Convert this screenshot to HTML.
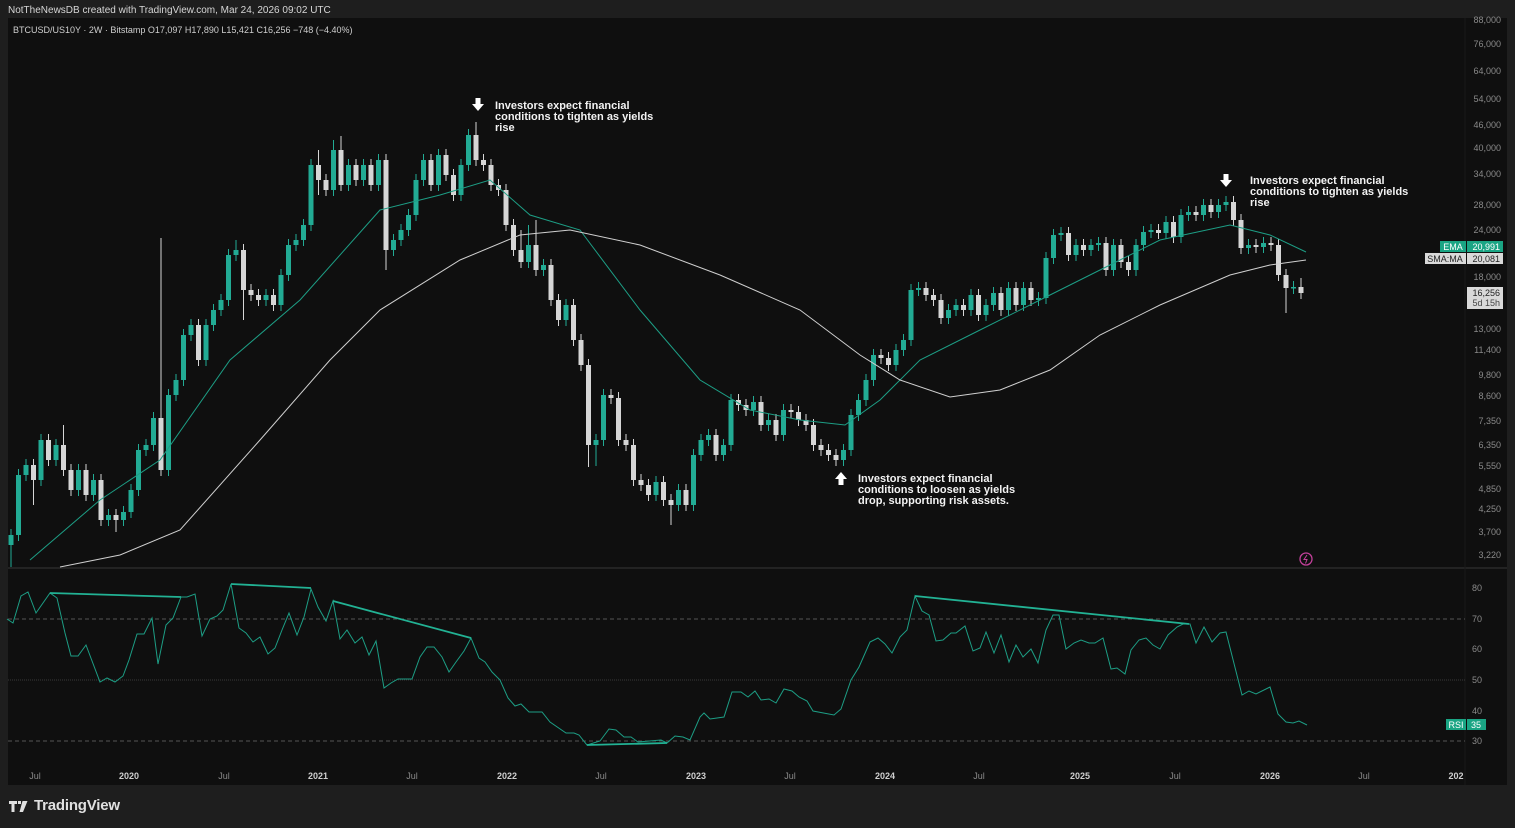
<!DOCTYPE html>
<html><head><meta charset="utf-8">
<style>
html,body{margin:0;padding:0;background:#1e1e1e;width:1515px;height:828px;overflow:hidden;font-family:"Liberation Sans",sans-serif}
#top{position:absolute;left:8px;top:5px;color:#d6d6d6;font-size:10px}
#panel{position:absolute;left:8px;top:18px;width:1499px;height:767px;background:#0f0f0f}
svg{position:absolute;left:0;top:0}
#logo{position:absolute;left:34px;top:797px;color:#e0e0e0;font-size:15px;font-weight:bold;letter-spacing:-0.2px}
</style></head><body>
<div id="top">NotTheNewsDB created with TradingView.com, Mar 24, 2026 09:02 UTC</div>
<div id="panel"></div>
<svg width="1515" height="828" xmlns="http://www.w3.org/2000/svg" font-family="Liberation Sans, sans-serif">
<text x="13" y="33" fill="#cfcfcf" font-size="9">BTCUSD/US10Y · 2W · Bitstamp  O17,097  H17,890  L15,421  C16,256  −748 (−4.40%)</text>
<line x1="8" y1="568" x2="1507" y2="568" stroke="#2a2a2a" stroke-width="1.5"/>
<line x1="1465" y1="18" x2="1465" y2="785" stroke="#1a1a1a"/>
<!-- green candles -->
<path stroke="#22ab94" stroke-width="1" fill="none" d="M11 529V567M18.5 469V541M26 459V481M41 434V486M56 439V466M78.5 464V496M93.5 474V501M108.5 509V526M123.5 506V526M131 484V518M138.5 444V496M146 439V456M153.5 412V451M168.5 389V476M176 374V401M183.5 329V386M191 319V341M206 319V366M213.5 304V331M221 294V316M228.5 249V306M236 240V261M266 289V306M281 269V311M288.5 239V281M296 234V251M303.5 219V246M311 159V231M333.5 140V196M348.5 159V191M363.5 159V186M378.5 154V191M393.5 234V256M401 224V246M408.5 209V236M416 174V221M423.5 154V186M438.5 149V191M461 159V201M468.5 129V171M528.5 225V268M543.5 259V276M566 299V326M596 434V466M603.5 389V446M656 476V501M678.5 484V511M693.5 449V511M701 434V461M708.5 429V446M723.5 439V461M731 394V451M753.5 396V416M768.5 414V431M783.5 404V441M843.5 444V466M851 409V456M858.5 394V421M866 374V406M873.5 349V386M896 344V371M903.5 334V356M911 284V346M918.5 282V296M948.5 304V324M956 299V316M971 289V316M986 299V321M993.5 287V311M1008.5 282V316M1023.5 282V311M1038.5 292V306M1046 252V304M1053.5 229V264M1061 227V241M1076 239V261M1091 239V256M1098.5 237V251M1113.5 239V276M1136 239V276M1143.5 226V251M1151 224V238M1166 216V239M1181 209V243M1188.5 206V221M1203.5 199V221M1218.5 199V218M1226 196V211M1248.5 239V254M1263.5 237V253M1293.5 281V294"/>
<path stroke="#22ab94" stroke-width="5" fill="none" d="M11 535V545M18.5 475V535M26 465V475M41 440V480M56 445V460M78.5 470V490M93.5 480V495M108.5 515V520M123.5 512V520M131 490V512M138.5 450V490M146 445V450M153.5 418V445M168.5 395V470M176 380V395M183.5 335V380M191 325V335M206 325V360M213.5 310V325M221 300V310M228.5 255V300M236 250V255M266 295V300M281 275V305M288.5 245V275M296 240V245M303.5 225V240M311 165V225M333.5 150V190M348.5 165V185M363.5 165V180M378.5 160V185M393.5 240V250M401 230V240M408.5 215V230M416 180V215M423.5 160V180M438.5 155V185M461 165V195M468.5 135V165M528.5 245V262M543.5 265V270M566 305V320M596 440V445M603.5 395V440M656 482V495M678.5 490V505M693.5 455V505M701 440V455M708.5 435V440M723.5 445V455M731 400V445M753.5 402V410M768.5 420V425M783.5 410V435M843.5 450V460M851 415V450M858.5 400V415M866 380V400M873.5 355V380M896 350V365M903.5 340V350M911 290V340M918.5 288V290M948.5 310V318M956 305V310M971 295V310M986 305V315M993.5 293V305M1008.5 288V310M1023.5 288V305M1038.5 298V300M1046 258V298M1053.5 235V258M1061 233V235M1076 245V255M1091 245V250M1098.5 243V245M1113.5 245V270M1136 245V270M1143.5 232V245M1151 230V232M1166 222V233M1181 215V237M1188.5 212V215M1203.5 205V215M1218.5 205V212M1226 202V205M1248.5 245V248M1263.5 243V247M1293.5 287V288.5"/>
<!-- white candles -->
<path stroke="#d6d6d6" stroke-width="1" fill="none" d="M33.5 459V505M48.5 434V466M63.5 425V476M71 464V496M86 464V501M101 474V526M116 509V532M161 238V476M198.5 319V366M243.5 244V320M251 284V301M258.5 289V306M273.5 289V311M318.5 150V195M326 174V196M341 136V191M356 159V186M371 159V191M386 154V270M431 154V191M446 149V181M453.5 169V201M476 122V166M483.5 154V171M491 159V191M498.5 179V196M506 184V231M513.5 219V256M521 230V268M536 220V276M551 259V306M558.5 294V326M573.5 299V346M581 334V371M588.5 359V467M611 389V404M618.5 392V446M626 434V451M633.5 439V486M641 474V491M648.5 479V501M663.5 476V506M671 494V525M686 484V511M716 429V461M738.5 394V411M746 399V416M761 396V431M776 414V441M791 404V418M798.5 406V426M806 414V431M813.5 419V451M821 439V456M828.5 444V461M836 449V466M881 349V364M888.5 352V371M926 282V301M933.5 289V306M941 294V324M963.5 299V316M978.5 289V321M1001 287V316M1016 282V311M1031 282V306M1068.5 227V261M1083.5 239V256M1106 237V276M1121 239V268M1128.5 256V276M1158.5 224V239M1173.5 216V243M1196 206V221M1211 199V218M1233.5 196V226M1241 214V254M1256 239V253M1271 237V251M1278.5 239V281M1286 269V313M1301 278V299"/>
<path stroke="#d6d6d6" stroke-width="5" fill="none" d="M33.5 465V480M48.5 440V460M63.5 445V470M71 470V490M86 470V495M101 480V520M116 515V520M161 418V470M198.5 325V360M243.5 250V290M251 290V295M258.5 295V300M273.5 295V305M318.5 165V180M326 180V190M341 150V185M356 165V180M371 165V185M386 160V250M431 160V185M446 155V175M453.5 175V195M476 135V160M483.5 160V165M491 165V185M498.5 185V190M506 190V225M513.5 225V250M521 250V262M536 245V270M551 265V300M558.5 300V320M573.5 305V340M581 340V365M588.5 365V445M611 395V398M618.5 398V440M626 440V445M633.5 445V480M641 480V485M648.5 485V495M663.5 482V500M671 500V505M686 490V505M716 435V455M738.5 400V405M746 405V410M761 402V425M776 420V435M791 410V412M798.5 412V420M806 420V425M813.5 425V445M821 445V450M828.5 450V455M836 455V460M881 355V358M888.5 358V365M926 288V295M933.5 295V300M941 300V318M963.5 305V310M978.5 295V315M1001 293V310M1016 288V305M1031 288V300M1068.5 233V255M1083.5 245V250M1106 243V270M1121 245V262M1128.5 262V270M1158.5 230V233M1173.5 222V237M1196 212V215M1211 205V212M1233.5 202V220M1241 220V248M1256 245V247M1271 243V245M1278.5 245V275M1286 275V288M1301 287V293"/>
<polyline fill="none" stroke="#1d9e85" stroke-width="1" points="30,560 100,500 160,460 230,360 300,300 380,210 440,195 490,180 530,215 580,230 640,310 700,380 750,410 800,420 845,425 880,400 920,360 980,330 1040,300 1100,270 1160,240 1230,225 1270,235 1306,252"/>
<polyline fill="none" stroke="#d0d0d0" stroke-width="1" points="60,567 120,555 180,530 260,440 330,360 380,310 460,260 520,235 570,230 640,245 720,275 800,310 860,355 900,380 950,397 1000,390 1050,370 1100,335 1160,305 1230,275 1270,265 1306,260"/>
<g fill="#8a8a8a" font-size="9" text-anchor="end">
<text x="1501" y="23">88,000</text><text x="1501" y="47">76,000</text><text x="1501" y="74">64,000</text><text x="1501" y="102">54,000</text><text x="1501" y="128">46,000</text><text x="1501" y="151">40,000</text><text x="1501" y="177">34,000</text><text x="1501" y="208">28,000</text><text x="1501" y="233">24,000</text><text x="1501" y="280">18,000</text><text x="1501" y="332">13,000</text><text x="1501" y="353">11,400</text><text x="1501" y="378">9,800</text><text x="1501" y="399">8,600</text><text x="1501" y="424">7,350</text><text x="1501" y="448">6,350</text><text x="1501" y="469">5,550</text><text x="1501" y="492">4,850</text><text x="1501" y="512">4,250</text><text x="1501" y="535">3,700</text><text x="1501" y="558">3,220</text>
<text x="1482" y="591">80</text><text x="1482" y="622">70</text><text x="1482" y="652">60</text><text x="1482" y="683">50</text><text x="1482" y="714">40</text><text x="1482" y="744">30</text>
</g>
<rect x="1440" y="241" width="26" height="11" fill="#1aa584"/><rect x="1467" y="241" width="36" height="11" fill="#1aa584"/>
<text x="1453" y="250" fill="#fff" font-size="9" text-anchor="middle">EMA</text><text x="1500" y="250" fill="#fff" font-size="9" text-anchor="end">20,991</text>
<rect x="1425" y="253" width="41" height="11" fill="#d9d9d9"/><rect x="1467" y="253" width="36" height="11" fill="#d9d9d9"/>
<text x="1445" y="262" fill="#222" font-size="9" text-anchor="middle">SMA:MA</text><text x="1500" y="262" fill="#222" font-size="9" text-anchor="end">20,081</text>
<rect x="1467" y="287" width="36" height="22" fill="#d9d9d9"/>
<text x="1500" y="296" fill="#222" font-size="9" text-anchor="end">16,256</text><text x="1500" y="306" fill="#444" font-size="9" text-anchor="end">5d 15h</text>
<rect x="1446" y="719" width="20" height="11" fill="#1aa584"/><rect x="1467" y="719" width="19" height="11" fill="#1aa584"/>
<text x="1456" y="728" fill="#fff" font-size="9" text-anchor="middle">RSI</text><text x="1476" y="728" fill="#fff" font-size="9" text-anchor="middle">35</text>
<circle cx="1306" cy="559" r="6" fill="none" stroke="#c2409a" stroke-width="1.3"/><path d="M1307 555 l-3 4.5 h3 l-1.5 4" fill="none" stroke="#c2409a" stroke-width="1"/>
<g fill="#f2f2f2" font-size="11" font-weight="bold">
<text x="495" y="109">Investors expect financial</text><text x="495" y="120">conditions to tighten as yields</text><text x="495" y="131">rise</text>
<text x="1250" y="184">Investors expect financial</text><text x="1250" y="195">conditions to tighten as yields</text><text x="1250" y="206">rise</text>
<text x="858" y="482">Investors expect financial</text><text x="858" y="493">conditions to loosen as yields</text><text x="858" y="504">drop, supporting risk assets.</text>
</g>
<path d="M475.5 98h5v6h3.5l-6 7l-6-7h3.5z" fill="#fff"/>
<path d="M1223.5 174h5v6h3.5l-6 7l-6-7h3.5z" fill="#fff"/>
<path d="M838.5 485h5v-6h3.5l-6-7l-6 7h3.5z" fill="#fff"/>
<line x1="8" y1="619" x2="1465" y2="619" stroke="#555" stroke-dasharray="4,3"/>
<line x1="8" y1="741" x2="1465" y2="741" stroke="#555" stroke-dasharray="4,3"/>
<line x1="8" y1="680" x2="1465" y2="680" stroke="#3a3a3a" stroke-dasharray="1,1"/>
<polyline fill="none" stroke="#1d9e85" stroke-width="1" points="7,619 13,623 21,596 28,592 36,613 50,593 57,598 65,633 71,656 78,656 86,645 100,682 107,678 115,682 123,676 129,660 137,634 144,634 152,618 158,664 166,625 173,618 181,597 187,597 195,594 202,636 210,619 217,616 223,610 231,584 239,628 246,633 253,642 260,637 268,654 275,648 282,630 289,613 297,635 304,617 311,589 318,607 326,621 333,601 340,639 347,630 355,643 362,637 369,655 376,641 384,688 391,683 398,679 412,679 420,657 427,647 434,647 442,657 449,672 456,662 464,651 471,638 479,658 485,662 492,672 500,680 508,698 515,706 521,704 529,712 542,712 550,722 566,733 574,733 579,735 587,745 600,741 609,729 616,730 624,737 631,737 638,742 661,740 667,743 675,736 683,737 690,740 700,717 704,713 710,719 724,717 732,692 741,692 748,697 755,691 761,700 769,699 776,703 784,689 792,691 799,697 807,701 813,711 834,715 841,709 851,680 859,667 870,642 878,638 885,644 892,653 900,637 907,630 915,596 922,611 929,615 936,641 943,640 951,633 956,633 965,626 973,651 980,648 986,632 994,653 1001,635 1009,662 1016,645 1023,657 1031,649 1038,663 1046,630 1053,615 1059,615 1066,649 1074,643 1081,640 1089,643 1095,643 1103,638 1111,669 1117,668 1125,674 1131,650 1139,640 1146,638 1153,645 1160,649 1168,635 1177,627 1183,624 1190,624 1196,643 1204,627 1212,642 1220,633 1226,632 1242,695 1249,691 1256,694 1270,687 1278,714 1286,722 1293,723 1299,721 1307,725"/>
<g stroke="#22b294" stroke-width="1.8">
<line x1="50" y1="593" x2="181" y2="597"/><line x1="231" y1="584" x2="311" y2="588"/><line x1="333" y1="601" x2="471" y2="638"/><line x1="587" y1="745" x2="667" y2="743"/><line x1="915" y1="596" x2="1189" y2="624"/>
</g>
<g fill="#8a8a8a" font-size="9" text-anchor="middle">
<text x="35" y="779">Jul</text><text x="129" y="779" fill="#cfcfcf" font-weight="bold">2020</text><text x="224" y="779">Jul</text><text x="318" y="779" fill="#cfcfcf" font-weight="bold">2021</text><text x="412" y="779">Jul</text><text x="507" y="779" fill="#cfcfcf" font-weight="bold">2022</text><text x="601" y="779">Jul</text><text x="696" y="779" fill="#cfcfcf" font-weight="bold">2023</text><text x="790" y="779">Jul</text><text x="885" y="779" fill="#cfcfcf" font-weight="bold">2024</text><text x="979" y="779">Jul</text><text x="1080" y="779" fill="#cfcfcf" font-weight="bold">2025</text><text x="1175" y="779">Jul</text><text x="1270" y="779" fill="#cfcfcf" font-weight="bold">2026</text><text x="1364" y="779">Jul</text><text x="1456" y="779" fill="#cfcfcf" font-weight="bold">202</text>
</g>
<path d="M9 801h8v3h-2.5v8h-3v-8h-2.5z M18 801h3v3h-3z M22.5 801h5l-4.5 11h-3.5z" fill="#e0e0e0"/>
</svg>
<div id="logo">TradingView</div>
</body></html>
